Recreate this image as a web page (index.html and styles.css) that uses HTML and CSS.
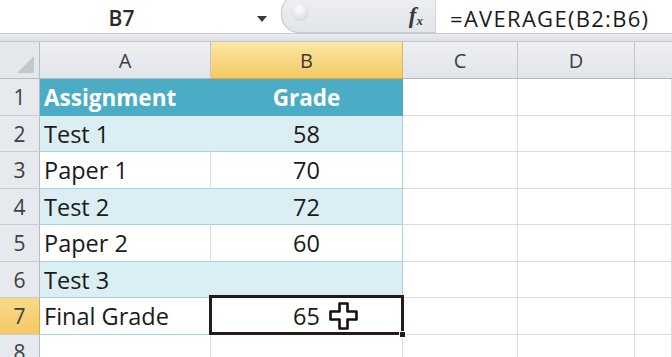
FILE: index.html
```html
<!DOCTYPE html>
<html>
<head>
  <meta charset="utf-8" />
  <title>Final Grade</title>
  <link rel="stylesheet" href="styles.css">
</head>
<body>
  <section class="formula-bar">
    <div class="name-box">B7</div>
    <div class="name-drop"><span class="tri"></span></div>
    <div class="fx-pill">
      <span class="knob"></span>
      <span class="fx">f<sub>x</sub></span>
    </div>
    <div class="formula">=AVERAGE(B2:B6)</div>
  </section>
  <div class="band"></div>
  <section class="sheet">
    <div class="corner"><span class="corner-tri"></span></div>
    <div class="col-head">A</div>
    <div class="col-head active">B</div>
    <div class="col-head">C</div>
    <div class="col-head">D</div>
    <div class="col-head last"></div>

    <div class="row-head">1</div>
    <div class="cell th">Assignment</div>
    <div class="cell th num">Grade</div>
    <div class="cell"></div><div class="cell"></div><div class="cell"></div>

    <div class="row-head">2</div>
    <div class="cell band-row">Test 1</div>
    <div class="cell band-row num edge">58</div>
    <div class="cell"></div><div class="cell"></div><div class="cell"></div>

    <div class="row-head">3</div>
    <div class="cell plain-row">Paper 1</div>
    <div class="cell plain-row num edge">70</div>
    <div class="cell"></div><div class="cell"></div><div class="cell"></div>

    <div class="row-head">4</div>
    <div class="cell band-row">Test 2</div>
    <div class="cell band-row num edge">72</div>
    <div class="cell"></div><div class="cell"></div><div class="cell"></div>

    <div class="row-head">5</div>
    <div class="cell plain-row">Paper 2</div>
    <div class="cell plain-row num edge">60</div>
    <div class="cell"></div><div class="cell"></div><div class="cell"></div>

    <div class="row-head">6</div>
    <div class="cell band-row">Test 3</div>
    <div class="cell band-row num edge"></div>
    <div class="cell"></div><div class="cell"></div><div class="cell"></div>

    <div class="row-head active">7</div>
    <div class="cell plain-row">Final Grade</div>
    <div class="cell plain-row num edge selected">
      65
      <span class="selection"></span>
      <span class="handle"></span>
      <svg class="cursor" width="30" height="28" viewBox="0 0 30 28">
        <path d="M10.5 1.5 h8 v8 h9 v8 h-9 v9 h-8 v-9 h-9 v-8 h9 z" fill="#fff" stroke="#111" stroke-width="2.6" stroke-linejoin="round"/>
      </svg>
    </div>
    <div class="cell"></div><div class="cell"></div><div class="cell"></div>

    <div class="row-head last-row">8</div>
    <div class="cell"></div><div class="cell"></div>
    <div class="cell"></div><div class="cell"></div><div class="cell"></div>
  </section>
</body>
</html>
```

FILE: styles.css
```css
* { box-sizing: border-box; margin: 0; padding: 0; }
html, body { width: 672px; height: 357px; overflow: hidden; background: #fff; }
body { font-family: "Open Sans", "DejaVu Sans", sans-serif; color: #1a1a1a; }

/* formula bar */
.formula-bar {
  display: flex;
  align-items: stretch;
  height: 34px;
  background: #fff;
  border-bottom: 1px solid #c6cacf;
}
.name-box {
  width: 243px;
  text-align: center;
  font-size: 21px;
  font-weight: 600;
  line-height: 36px;
  color: #2a2a2a;
}
.name-drop {
  width: 38px;
  display: flex;
  align-items: center;
  justify-content: center;
  padding-top: 4px;
}
.tri {
  width: 0; height: 0;
  border-left: 5px solid transparent;
  border-right: 5px solid transparent;
  border-top: 6px solid #3a3a3a;
}
.fx-pill {
  position: relative;
  width: 155px;
  margin-top: -6px;
  background: linear-gradient(#eef0f3, #e2e5ea);
  border: 1px solid #c4c8ce;
  border-right: 1px solid #d3d6da;
  border-radius: 18px 0 0 18px;
  display: flex;
  justify-content: flex-end;
  align-items: center;
  padding-right: 12px;
}
.knob {
  position: absolute;
  left: 9px;
  top: 8px;
  width: 18px;
  height: 18px;
  border-radius: 50%;
  background: radial-gradient(circle at 45% 35%, #fff 0, #e8eaee 45%, #c4c8ce 100%);
}
.fx {
  font-family: "Liberation Serif", serif;
  font-style: italic;
  font-weight: bold;
  font-size: 23px;
  color: #3a3a3a;
  padding-top: 4px;
}
.fx sub { font-size: 13px; vertical-align: -2px; }
.formula {
  padding-left: 14px;
  font-size: 22px;
  font-weight: 500;
  letter-spacing: 1.3px;
  line-height: 36px;
  color: #1a1a1a;
}

.band {
  height: 8px;
  background: linear-gradient(#e9ecf0, #dde1e6);
  border-bottom: 1px solid #c3c7cd;
}

/* grid */
.sheet {
  display: grid;
  grid-template-columns: 40px 171px 192px 115px 117px 1fr;
  grid-template-rows: 37px 37px 36px 37px 36px 37px 36px 37px 30px;
}
.corner {
  position: relative;
  background: #e4e7eb;
  border-right: 1px solid #b9bdc3;
  border-bottom: 1px solid #b9bdc3;
}
.corner-tri {
  position: absolute;
  right: 5px;
  bottom: 5px;
  width: 0; height: 0;
  border-left: 17px solid transparent;
  border-bottom: 17px solid #c4c7cc;
}
.col-head {
  background: linear-gradient(#eef0f3, #e1e4e9);
  border-right: 1px solid #c2c6cc;
  border-bottom: 1px solid #b3b8bf;
  text-align: center;
  font-size: 20px;
  line-height: 37px;
  color: #404040;
}
.col-head.active {
  background: linear-gradient(#fbe7a4, #f5c964);
  border-bottom-color: #e0a73b;
  border-right-color: #e6b24c;
  color: #3a3a3a;
}
.col-head.last { border-right: none; }
.row-head {
  background: #e6e9ed;
  border-right: 1px solid #b9bdc3;
  border-bottom: 1px solid #c8ccd2;
  text-align: center;
  font-size: 21px;
  line-height: 37px;
  color: #404040;
}
.row-head.active {
  background: linear-gradient(#f9d98a, #f5c964);
  border-right-color: #e0a73b;
}
.row-head.last-row { line-height: 34px; }
.cell {
  border-right: 1px solid #dadcdf;
  border-bottom: 1px solid #dadcdf;
  font-size: 23.5px;
  font-weight: 500;
  line-height: 37px;
  padding-left: 4px;
  white-space: nowrap;
}
.cell.num { text-align: center; padding-left: 0; }
.cell.th {
  background: #4bacc6;
  border-color: #4bacc6;
  color: #fff;
  font-weight: bold;
  font-size: 22.5px;
}
.cell.band-row {
  background: #daeef3;
  border-right-color: #daeef3;
  border-bottom-color: #a3d4e1;
}
.cell.plain-row { border-bottom-color: #a3d4e1; }
.cell.edge { border-right-color: #a3d4e1; }

.selected { position: relative; }
.selection {
  position: absolute;
  left: -2px;
  right: -2px;
  top: -3px;
  bottom: -1px;
  border: 3px solid #241a1a;
}
.handle {
  position: absolute;
  right: -4px;
  bottom: -4px;
  width: 7px;
  height: 7px;
  background: #241a1a;
  border: 1px solid #fff;
}
.cursor {
  position: absolute;
  left: 118px;
  top: 4px;
}
```
